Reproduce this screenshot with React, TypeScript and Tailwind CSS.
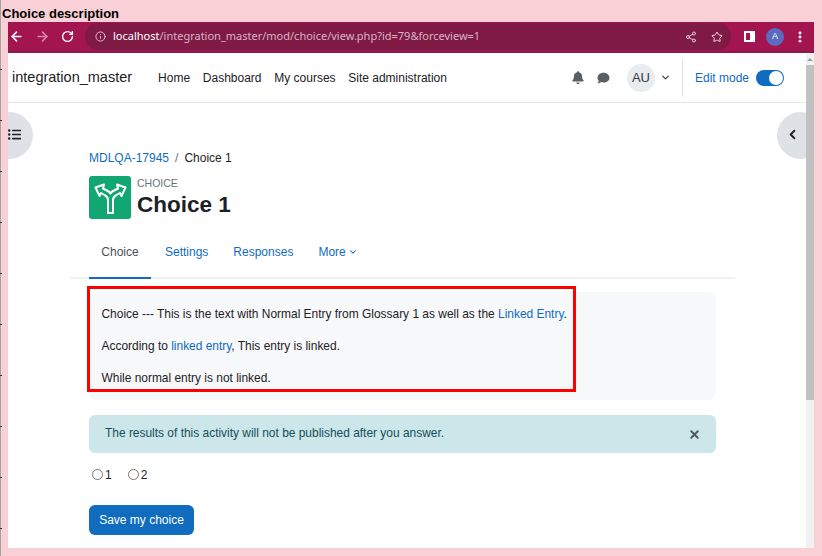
import React from "react";
import { ArrowLeft, ArrowRight, RotateCw, Info, Share2, Star, ChevronDown, ChevronLeft, X, MoreVertical } from "lucide-react";
import { FaBell, FaComment, FaListUl } from "react-icons/fa";

const ticks = [0, 1, 2, 3, 4, 5, 6, 7, 8, 9];

const BrowserBar = () => (
  <div className="h-[31px] bg-[#a3154f] border-b-2 border-[#8c1a4a] flex items-center shrink-0">
    <ArrowLeft className="w-[15px] h-[15px] ml-[1px] text-white" strokeWidth={2.5} />
    <ArrowRight className="w-[15px] h-[15px] ml-[11px] text-[#d58aa8]" strokeWidth={2.5} />
    <RotateCw className="w-[13px] h-[13px] ml-[11px] text-white" strokeWidth={2.5} />
    <div className="ml-[11px] w-[646px] h-[27px] rounded-full bg-[#7f1a45] flex items-center pl-[10px] pr-[8px]">
      <Info className="w-[11px] h-[11px] text-[#e7c9d6]" />
      <span className="ml-[7px] text-[11px] text-[#d9b4c4] font-['Noto_Sans',sans-serif] whitespace-nowrap">
        <span className="text-white">localhost</span>/integration_master/mod/choice/view.php?id=79&amp;forceview=1
      </span>
      <Share2 className="ml-auto w-[12px] h-[12px] text-[#e7c9d6]" />
      <Star className="ml-[14px] w-[12px] h-[12px] text-[#f0dbe4]" />
    </div>
    <div className="ml-[13px] w-[11px] h-[11px] border-2 border-white flex justify-end">
      <div className="w-[3px] h-full bg-white" />
    </div>
    <div className="ml-[11px] w-[18px] h-[18px] rounded-full bg-[#5c6bc0] text-white text-[9px] flex items-center justify-center">A</div>
    <MoreVertical className="ml-[9px] w-[14px] h-[14px] text-white" strokeWidth={3} />
  </div>
);

const Navbar = () => (
  <nav className="h-[50px] bg-white border-b border-[#e5e7e9] flex items-center pl-[4px] pr-[22px] shrink-0">
    <span className="text-[14.5px] text-[#1d2125]">integration_master</span>
    <div className="ml-[26px] flex items-center gap-[12.7px] text-[12px] text-[#1d2125]">
      <span>Home</span>
      <span>Dashboard</span>
      <span>My courses</span>
      <span>Site administration</span>
    </div>
    <div className="ml-auto flex items-center">
      <FaBell className="w-[12px] h-[13px] text-[#5a5f64]" />
      <FaComment className="ml-[13px] w-[13px] h-[12px] text-[#5a5f64]" />
      <div className="ml-[17px] w-[28px] h-[28px] rounded-full bg-[#e9ecef] flex items-center justify-center text-[13px] text-[#343a40]">AU</div>
      <ChevronDown className="ml-[5px] w-[11px] h-[11px] text-[#343a40]" strokeWidth={2.5} />
      <div className="ml-[11px] h-[38px] w-px bg-[#dee2e6]" />
      <span className="ml-[12px] text-[12px] text-[#0f6cbf]">Edit mode</span>
      <div className="ml-[7px] w-[28px] h-[16px] rounded-full bg-[#0f6cbf] flex items-center justify-end pr-[1px]">
        <div className="w-[14px] h-[14px] rounded-full bg-white" />
      </div>
    </div>
  </nav>
);

const ChoiceIcon = () => (
  <div className="w-[42px] h-[43px] rounded-[3px] bg-[#12a772] flex items-center justify-center">
    <svg width="33" height="35" viewBox="0 0 33 35" fill="none" stroke="white" strokeWidth="2" strokeLinejoin="round">
      <path d="M14 33V20C14 17 12.5 16 10.5 15L7 13L5.5 16L1.5 7.5L10 4.5L9 8.5L13 10.5C15 11.5 16 12.5 16.5 13.5C17 12.5 18 11.5 20 10.5L24 8.5L23 4.5L31.5 7.5L27.5 16L26 13L22.5 15C20.5 16 19 17 19 20V33Z" />
    </svg>
  </div>
);

const Content = () => (
  <div className="pt-[46px] pl-[81px] pr-[90px]">
    <div className="flex items-center text-[12px] h-[18px]">
      <span className="text-[#0f6cbf]">MDLQA-17945</span>
      <span className="mx-[6px] text-[#6a737b]">/</span>
      <span className="text-[#1d2125]">Choice 1</span>
    </div>
    <div className="flex mt-[9px]">
      <ChoiceIcon />
      <div className="ml-[6px] flex flex-col">
        <span className="text-[10.5px] leading-[12px] text-[#6a737b] mt-[1px]">CHOICE</span>
        <span className="text-[22.5px] leading-[28px] font-bold text-[#1d2125] mt-[2px]">Choice 1</span>
      </div>
    </div>
    <div className="mt-[16px] -mx-[19px] px-[19px] border-b-2 border-[#eef0f1] h-[44px] flex text-[12px] text-[#0f6cbf]">
      <div className="w-[62px] h-[44px] border-b-2 border-[#0f6cbf] flex items-center justify-center text-[#495057] pb-[8px]">Choice</div>
      <div className="ml-[14px] flex items-center h-[34px]">Settings</div>
      <div className="ml-[25px] flex items-center h-[34px]">Responses</div>
      <div className="ml-[25px] flex items-center h-[34px]">
        More <ChevronDown className="ml-[2px] w-[10px] h-[10px]" strokeWidth={2.5} />
      </div>
    </div>
    <div className="mt-[13px] bg-[#f7f8fa] rounded-[8px] h-[108px] pl-[12.5px] pr-[13px] pt-[13px] text-[11.95px] text-[#1d2125] flex flex-col gap-[13.5px] leading-[18.5px] relative">
      <p>Choice --- This is the text with Normal Entry from Glossary 1 as well as the <span className="text-[#0f6cbf]">Linked Entry</span>.</p>
      <p>According to <span className="text-[#0f6cbf]">linked entry</span>, This entry is linked.</p>
      <p>While normal entry is not linked.</p>
      <div className="absolute left-[-2px] top-[-6px] w-[489px] h-[106px] border-[3px] border-[#ff0000]" />
    </div>
    <div className="mt-[15px] h-[38px] rounded-[6px] bg-[#cde6ea] flex items-center pl-[16px] pr-[15px] text-[11.95px] text-[#13505c]">
      The results of this activity will not be published after you answer.
      <X className="ml-auto w-[13px] h-[13px] text-[#50585e]" strokeWidth={3.5} />
    </div>
    <div className="mt-[13px] ml-[3px] flex items-center h-[18px] text-[12px] text-[#1d2125]">
      <span className="w-[11px] h-[11px] rounded-full border border-[#767676] bg-white mb-[2px]" />
      <span className="ml-[2px]">1</span>
      <span className="ml-[16px] w-[11px] h-[11px] rounded-full border border-[#767676] bg-white mb-[2px]" />
      <span className="ml-[2px]">2</span>
    </div>
    <button className="mt-[21px] w-[105px] h-[30px] rounded-[6px] bg-[#0f6cbf] text-white text-[12px] flex items-center justify-center">Save my choice</button>
  </div>
);

const Scrollbar = () => (
  <div className="w-[8px] bg-[#f1f1f1] flex flex-col shrink-0">
    <div className="h-[12px] flex justify-center items-center">
      <div className="w-0 h-0 border-x-[3px] border-x-transparent border-b-[3px] border-b-[#a0a0a0]" />
    </div>
    <div className="h-[335px] bg-[#c1c1c1]" />
  </div>
);

export default function App() {
  return (
    <div className="relative w-[822px] h-[556px] bg-[#f8d0d5] overflow-hidden font-['Liberation_Sans',Arial,sans-serif]">
      <div className="h-[22px] pl-[2px] pt-[6px] text-[13px] leading-[15px] font-bold text-black">Choice description</div>
      <div className="ml-[8px] w-[806px] h-[526px] flex flex-col bg-white overflow-hidden">
        <BrowserBar />
        <div className="flex flex-1 min-h-0">
          <div className="flex-1 min-w-0 flex flex-col relative overflow-hidden">
            <Navbar />
            <Content />
            <div className="absolute left-[-22px] top-[59px] w-[47px] h-[47px] rounded-full bg-[#dee2e6] flex items-center justify-end pr-[12px] pb-[3px]">
              <FaListUl className="w-[13px] h-[13px] text-[#1d2125]" />
            </div>
            <div className="absolute right-[-18px] top-[59px] w-[47px] h-[47px] rounded-full bg-[#dee2e6] flex items-center pl-[8px] pb-[3px]">
              <ChevronLeft className="w-[15px] h-[15px] text-[#1d2125]" strokeWidth={3} />
            </div>
          </div>
          <Scrollbar />
        </div>
      </div>
      <div className="absolute left-0 top-0 w-px h-full bg-[#a3a3a3] flex flex-col pt-[69px] gap-[50px]">
        {ticks.map((t) => (
          <div key={t} className="w-[2px] h-px shrink-0 bg-[#333333]" />
        ))}
      </div>
    </div>
  );
}
